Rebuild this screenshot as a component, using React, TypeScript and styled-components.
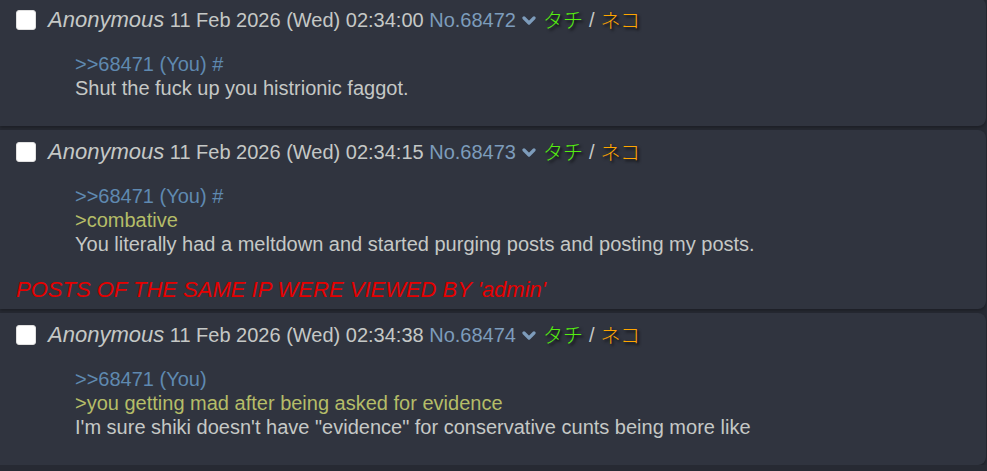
import React from "react";
import styled, { createGlobalStyle } from "styled-components";

const Global = createGlobalStyle`
  html, body {
    margin: 0;
    padding: 0;
    background: #272a33;
    overflow: hidden;
  }
  body {
    font-family: "Liberation Sans", Arial, sans-serif;
  }
`;

const Thread = styled.div`
  display: flex;
  flex-direction: column;
  gap: 4px;
  margin-top: -2px;
`;

const Card = styled.div`
  background: #30343f;
  border-radius: 0 8px 8px 0;
  margin-right: 1px;
  padding: 10px 0 0 16px;
  box-shadow: 0 2px 3px rgba(0, 0, 0, 0.25);
`;

const Header = styled.div`
  display: flex;
  align-items: center;
  height: 24px;
  font-size: 20px;
  line-height: 24px;
  color: #c5c8c6;
  white-space: nowrap;
`;

const Check = styled.input.attrs({ type: "checkbox" })`
  appearance: none;
  width: 20px;
  height: 20px;
  margin: 0 12px 0 0;
  background: #fff;
  border-radius: 3px;
  border: 1px solid #e0e0e0;
  box-sizing: border-box;
`;

const Name = styled.span`
  font-style: italic;
  font-size: 22px;
  color: #c5c8c6;
`;

const PostNo = styled.span`
  color: #7d9cbb;
`;

const Chevron = styled.svg`
  width: 14px;
  height: 10px;
  margin: 1px 7px 0 6px;
`;

const Kana = styled.span<{ $tone: string }>`
  font-family: "Noto Sans CJK JP", sans-serif;
  font-size: 20px;
  font-weight: 300;
  color: ${({ $tone }) => $tone};
  text-shadow: 2px 2px 3px rgba(0, 0, 0, 0.9);
`;

const Slash = styled.span`
  color: #c5c8c6;
  margin: 0 6px;
`;

const Body = styled.div`
  margin: 20px 0 26px 59px;
  font-size: 20px;
  line-height: 24px;
  color: #c5c8c6;
`;

const Line = styled.div``;

const QuoteLink = styled.span`
  color: #5f89b0;
`;

const Green = styled.div`
  color: #b5bd68;
`;

const Notice = styled.div`
  margin: -4px 0 0 0;
  padding-bottom: 7px;
  font-size: 22px;
  line-height: 24px;
  font-style: italic;
  color: #e60000;
`;

type Post = {
  time: string;
  no: number;
  quote: string;
  green?: string;
  text: string;
  notice?: string;
};

const posts: Post[] = [
  {
    time: "02:34:00",
    no: 68472,
    quote: ">>68471 (You) #",
    text: "Shut the fuck up you histrionic faggot.",
  },
  {
    time: "02:34:15",
    no: 68473,
    quote: ">>68471 (You) #",
    green: ">combative",
    text: "You literally had a meltdown and started purging posts and posting my posts.",
    notice: "POSTS OF THE SAME IP WERE VIEWED BY 'admin'",
  },
  {
    time: "02:34:38",
    no: 68474,
    quote: ">>68471 (You)",
    green: ">you getting mad after being asked for evidence",
    text: "I'm sure shiki doesn't have \"evidence\" for conservative cunts being more like",
  },
];

const PostCard = ({ p }: { p: Post }) => (
  <Card>
    <Header>
      <Check />
      <span>
        <Name>Anonymous</Name> 11 Feb 2026 (Wed) {p.time}{" "}
        <PostNo>No.{p.no}</PostNo>
      </span>
      <Chevron viewBox="0 0 14 10">
        <polyline
          points="2,2 7,7 12,2"
          fill="none"
          stroke="#7d9cbb"
          strokeWidth="3.2"
          strokeLinecap="round"
          strokeLinejoin="round"
        />
      </Chevron>
      <Kana $tone="#55ee11">タチ</Kana>
      <Slash>/</Slash>
      <Kana $tone="#ffa500">ネコ</Kana>
    </Header>
    <Body>
      <Line>
        <QuoteLink>{p.quote}</QuoteLink>
      </Line>
      {p.green && <Green>{p.green}</Green>}
      <Line>{p.text}</Line>
    </Body>
    {p.notice && <Notice>{p.notice}</Notice>}
  </Card>
);

export default function App() {
  return (
    <>
      <Global />
      <Thread>
        {posts.map((p) => (
          <PostCard key={p.no} p={p} />
        ))}
      </Thread>
    </>
  );
}
